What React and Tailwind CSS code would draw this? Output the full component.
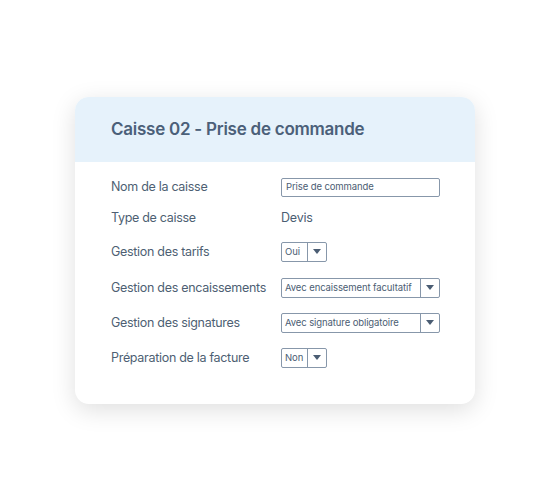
import React from 'react';

const Arrow = () => (
  <svg width="8" height="6" viewBox="0 0 8 6" className="fill-[#4b5d73]">
    <path d="M0 0h8L4 5z" />
  </svg>
);

const Select = ({ value, wide }) => (
  <div
    className={`flex h-[20px] items-stretch rounded-[2px] border border-[#8797aa] bg-white ${wide ? 'w-[159px]' : 'w-[46px]'}`}
  >
    <span className="flex flex-1 items-center overflow-hidden whitespace-nowrap pl-[3px] text-[9.5px] tracking-[-0.1px] text-[#4b5d73]">{value}</span>
    <span className="flex w-[19px] items-center justify-center border-l border-[#8797aa]">
      <Arrow />
    </span>
  </div>
);

const rows = [
  { label: 'Nom de la caisse', mt: 'mt-0', control: (
    <div className="flex h-[19px] w-[159px] items-center rounded-[2px] border border-[#8797aa] bg-white pl-[4px] text-[9.5px] tracking-[-0.1px] text-[#4b5d73]">
      Prise de commande
    </div>
  ) },
  { label: 'Type de caisse', mt: 'mt-[11px]', control: <span className="text-[12.5px] tracking-[-0.2px] text-[#4b5d73]">Devis</span> },
  { label: 'Gestion des tarifs', mt: 'mt-[14px]', control: <Select value="Oui" /> },
  { label: 'Gestion des encaissements', mt: 'mt-[16px]', control: <Select value="Avec encaissement facultatif" wide /> },
  { label: 'Gestion des signatures', mt: 'mt-[15px]', control: <Select value="Avec signature obligatoire" wide /> },
  { label: 'Préparation de la facture', mt: 'mt-[15px]', control: <Select value="Non" /> },
];

export default function App() {
  return (
    <div className="h-[500px] w-[550px] bg-white pl-[75px] pt-[97px] font-['Inter',sans-serif]">
      <div className="w-[400px] overflow-hidden rounded-[14px] bg-white shadow-[0_6px_24px_rgba(0,0,0,0.13)]">
        <div className="flex h-[65px] items-center bg-[#e6f2fb] pl-[36px]">
          <h1 className="text-[17px] font-semibold tracking-[-0.25px] text-[#4b6079]">Caisse 02 - Prise de commande</h1>
        </div>
        <div className="flex flex-col pb-[36px] pl-[36px] pt-[15px]">
          {rows.map((r) => (
            <div key={r.label} className={`flex h-[20px] items-center ${r.mt}`}>
              <span className="w-[170px] text-[12.5px] tracking-[-0.3px] text-[#4e5f73]">{r.label}</span>
              {r.control}
            </div>
          ))}
        </div>
      </div>
    </div>
  );
}
